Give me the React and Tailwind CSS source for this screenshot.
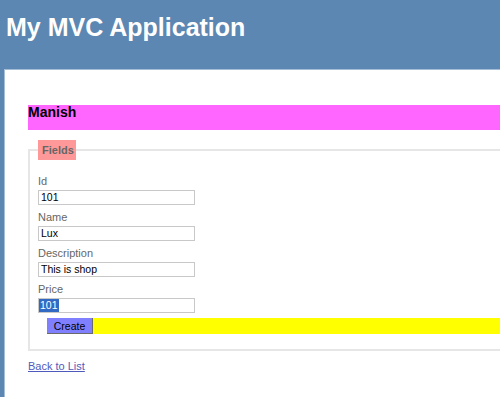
import React from 'react';

const fields = [
  { label: 'Id', value: '101' },
  { label: 'Name', value: 'Lux' },
  { label: 'Description', value: 'This is shop' },
  { label: 'Price', value: '101', selected: true },
];

function Field({ label, value, selected, first }) {
  return (
    <div className={first ? '' : 'mt-[4px]'}>
      <div className="text-[11px] leading-[17px] text-[#666]">{label}</div>
      <div className="w-[157px] h-[15px] border border-[#c8c8c8] text-[10.5px] leading-[13px] text-black bg-white">
        {selected ? (
          <span className="inline-block bg-[#316ac5] text-white px-[1px]">{value}</span>
        ) : (
          <span className="pl-[2px]">{value}</span>
        )}
      </div>
    </div>
  );
}

export default function App() {
  return (
    <div className="w-[500px] h-[397px] overflow-hidden bg-[#5c87b2] font-['Liberation_Sans',Arial,sans-serif]">
      {/* header */}
      <div className="h-[69px] pl-[6px] pt-[15px]">
        <h1 className="text-white font-bold text-[25px] leading-[25px]">My MVC Application</h1>
      </div>

      {/* main panel */}
      <div className="ml-[4px] w-[530px] h-[340px] bg-white border-t border-l border-[#a6bdd8] pl-[23px] pt-[35px]">
        <h2 className="h-[25px] bg-[#ff66ff] font-bold text-[14px] leading-[14px] text-black">Manish</h2>

        <fieldset className="mt-[10px] border-2 border-[#e6e6e6] px-[8px] pb-[15px]">
          <legend className="h-[20px] bg-[#ff9999] pl-[4px] pr-[2px] text-[11px] leading-[20px] font-bold text-[#666]">
            Fields
          </legend>
          <div className="pt-[13px]">
            {fields.map((f, i) => (
              <Field key={f.label} {...f} first={i === 0} />
            ))}
          </div>
          <div className="mt-[5px] ml-[9px] h-[16px] bg-[#ffff00] flex">
            <button className="h-[16px] w-[46px] bg-[#8080ff] border-r border-b border-[#6a6a6a] text-[10.5px] leading-[14px] text-black">
              Create
            </button>
          </div>
        </fieldset>

        <div className="mt-[7px] text-[11px] leading-[16px]">
          <a href="#" className="text-[#505abc] underline">Back to List</a>
        </div>
      </div>
    </div>
  );
}
